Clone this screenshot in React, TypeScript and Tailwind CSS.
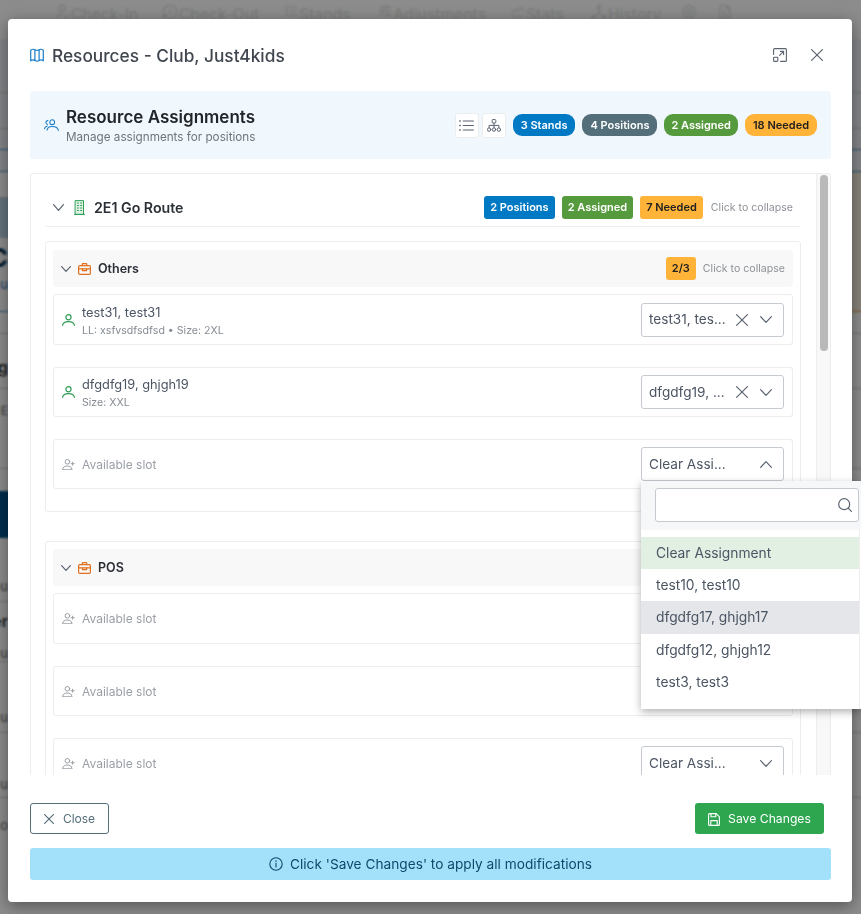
import React from 'react';
import {
  TbAdjustmentsHorizontal,
  TbChartLine,
  TbFileText,
  TbHierarchy2,
  TbHistory,
  TbListCheck,
  TbSettings,
  TbUserCheck,
} from 'react-icons/tb';

// Small hand drawn icons, sized in the pixels they take up on the page
function Icon({ w, h, className, sw = 1.2, children }: { w: number; h: number; className?: string; sw?: number; children: React.ReactNode }) {
  return (
    <svg
      width={w}
      height={h}
      viewBox={`0 0 ${w} ${h}`}
      fill="none"
      stroke="currentColor"
      strokeWidth={sw}
      strokeLinecap="round"
      strokeLinejoin="round"
      className={`shrink-0 ${className ?? ''}`}
    >
      {children}
    </svg>
  );
}

const ChevronDown = ({ w, h, className }: { w: number; h: number; className?: string }) => (
  <Icon w={w} h={h} className={className}>
    <path d={`M0.6 0.6 L${w / 2} ${h - 0.6} L${w - 0.6} 0.6`} />
  </Icon>
);

const ChevronUp = ({ w, h, className }: { w: number; h: number; className?: string }) => (
  <Icon w={w} h={h} className={className}>
    <path d={`M0.6 ${h - 0.6} L${w / 2} 0.6 L${w - 0.6} ${h - 0.6}`} />
  </Icon>
);

const Cross = ({ s, className }: { s: number; className?: string }) => (
  <Icon w={s} h={s} className={className}>
    <path d={`M0.6 0.6 L${s - 0.6} ${s - 0.6} M${s - 0.6} 0.6 L0.6 ${s - 0.6}`} />
  </Icon>
);

const UserIcon = ({ className }: { className?: string }) => (
  <Icon w={13} h={12} className={className}>
    <circle cx="6.5" cy="3.2" r="2.6" />
    <path d="M0.6 11.4 C1 8.6 3.4 7.6 6.5 7.6 S12 8.6 12.4 11.4" />
  </Icon>
);

const UserPlusIcon = ({ className }: { className?: string }) => (
  <Icon w={13} h={11} className={className} sw={1}>
    <circle cx="5.4" cy="2.8" r="2.3" />
    <path d="M0.5 10.4 C0.9 8 3 7 5.4 7 S9.6 8 10 10.4 Z" />
    <path d="M10.6 3.2 V6.2 M9.1 4.7 H12.3" />
  </Icon>
);

const Briefcase = ({ className }: { className?: string }) => (
  <Icon w={13} h={12} className={className}>
    <rect x="0.6" y="2.6" width="11.8" height="8.8" rx="1.2" />
    <path d="M4.2 2.6 V1.4 C4.2 0.9 4.6 0.6 5 0.6 H8 C8.4 0.6 8.8 0.9 8.8 1.4 V2.6" />
    <path d="M0.6 5.8 H12.4" />
    <path d="M4.4 5.8 V7.6 H8.6 V5.8" />
  </Icon>
);

const Building = ({ className }: { className?: string }) => (
  <Icon w={11} h={15} className={className} sw={1}>
    <rect x="1.5" y="0.6" width="8" height="13.8" fill="#dff1e5" />
    <path d="M0.4 14.4 H10.6" />
    <path d="M3.4 3 H4.4 M6.6 3 H7.6 M3.4 5.5 H4.4 M6.6 5.5 H7.6 M3.4 8 H4.4 M6.6 8 H7.6 M3.4 10.5 H4.4 M6.6 10.5 H7.6" />
  </Icon>
);

const MapIcon = ({ className }: { className?: string }) => (
  <Icon w={14} h={14} className={className}>
    <path d="M0.7 2.2 C2 1.2 3.6 1 4.9 1.8 V12.4 C3.6 11.6 2 11.8 0.7 12.8 Z" />
    <path d="M4.9 1.8 C6.1 2.6 7.9 2.6 9.1 1.8 V12.4 C7.9 13.2 6.1 13.2 4.9 12.4" />
    <path d="M9.1 1.8 C10.4 1 12 1.2 13.3 2.2 V12.8 C12 11.8 10.4 11.6 9.1 12.4" />
  </Icon>
);

const ExpandIcon = ({ className }: { className?: string }) => (
  <Icon w={14} h={14} className={className} sw={1.1}>
    <path d="M0.6 6.4 V1.6 C0.6 1 1 0.6 1.6 0.6 H12.4 C13 0.6 13.4 1 13.4 1.6 V12.4 C13.4 13 13 13.4 12.4 13.4 H7.6" />
    <rect x="0.6" y="9.2" width="4.2" height="4.2" rx="0.6" />
    <path d="M6.6 7.4 L10.6 3.4 M7.4 3.4 H10.6 V6.6" />
  </Icon>
);

const UsersIcon = ({ className }: { className?: string }) => (
  <Icon w={15} h={12} className={className} sw={1.05}>
    <circle cx="8.2" cy="3.2" r="2.4" />
    <path d="M3 11.2 C3.3 8.6 5.5 7.4 8.2 7.4 S13.9 8.6 14.4 11.4" />
    <path d="M3.9 1.6 C2.6 1.6 1.9 2.6 1.9 3.5 C1.9 4.4 2.6 5.2 3.6 5.4" />
    <path d="M0.5 9.8 C0.7 8.2 1.8 7.4 3.2 7" />
  </Icon>
);

const ListIcon = ({ className }: { className?: string }) => (
  <Icon w={15} h={11} className={className} sw={1.1}>
    <path d="M4.2 1 H14.4 M4.2 5.5 H14.4 M4.2 10 H14.4" />
    <path d="M0.8 1 H1.2 M0.8 5.5 H1.2 M0.8 10 H1.2" strokeWidth={1.5} />
  </Icon>
);

const TreeIcon = ({ className }: { className?: string }) => (
  <Icon w={14} h={13} className={className} sw={1}>
    <rect x="5.2" y="0.5" width="3.6" height="3.6" rx="1" />
    <path d="M7 4.1 V8.6 M2.1 8.6 V6.4 H11.9 V8.6" />
    <circle cx="2.1" cy="10.6" r="1.7" />
    <circle cx="7" cy="10.6" r="1.7" />
    <circle cx="11.9" cy="10.6" r="1.7" />
  </Icon>
);

const SearchIcon = ({ className }: { className?: string }) => (
  <Icon w={14} h={14} className={className}>
    <circle cx="6.2" cy="6.2" r="5.5" />
    <path d="M10.2 10.2 L13.4 13.4" />
  </Icon>
);

const SaveIcon = ({ className }: { className?: string }) => (
  <Icon w={12} h={13} className={className} sw={1.1}>
    <path d="M0.6 1.6 C0.6 1 1 0.6 1.6 0.6 H8.2 L11.4 3.8 V11.4 C11.4 12 11 12.4 10.4 12.4 H1.6 C1 12.4 0.6 12 0.6 11.4 Z" />
    <path d="M3 0.6 V3.8 H7.8 V0.6" />
    <path d="M2.8 12.4 V7.6 H9.2 V12.4" />
  </Icon>
);

const InfoIcon = ({ className }: { className?: string }) => (
  <Icon w={14} h={14} className={className} sw={1.1}>
    <circle cx="7" cy="7" r="6.2" />
    <path d="M7 6.4 V10" />
    <path d="M7 4 V4.2" strokeWidth={1.4} />
  </Icon>
);

// Strip of the page that peeks out left of the modal
function EdgeRow({ h, text, cls = '', line = '' }: { h: string; text?: string; cls?: string; line?: string }) {
  return (
    <div className={`${h} ${line} shrink-0 overflow-hidden`}>
      {text && <div className={`w-[8px] overflow-hidden flex justify-end whitespace-nowrap ${cls}`}>{text}</div>}
    </div>
  );
}

// Page that sits behind the backdrop, only its edges show
function BackgroundPage() {
  return (
    <div className="flex flex-col h-full bg-white text-[#333]">
      <div className="h-[39px] shrink-0 flex items-start pl-[53px] pt-[3px] text-[15.5px] font-medium text-[#dfe4e1] whitespace-nowrap">
        <TbUserCheck size={18} />
        <span className="w-[90px]">Check-In</span>
        <TbHistory size={18} />
        <span className="w-[104px]">Check-Out</span>
        <TbListCheck size={16} />
        <span className="w-[78px]">Stands</span>
        <TbAdjustmentsHorizontal size={16} />
        <span className="w-[116px]">Adjustments</span>
        <TbChartLine size={17} />
        <span className="w-[64px]">Stats</span>
        <TbHierarchy2 size={18} />
        <span className="w-[72px]">History</span>
        <TbSettings size={18} className="mr-[18px]" />
        <TbFileText size={18} />
      </div>
      <div className="h-[54px] shrink-0 bg-[#eef3f7] border-b border-[#ccc]" />
      <div className="h-[36px] shrink-0 bg-[#eef3f7] border-b border-[#ccc]" />
      <div className="h-[21px] shrink-0 bg-[#eef3f7] border-b border-[#4a90c8]" />
      <div className="h-[22px] shrink-0 bg-[#eef3f7] border-b border-[#4a90c8]" />
      <div className="h-[140px] shrink-0 flex">
        <div className="w-1/2 border-b border-[#4a90c8]">
          <div className="h-[25px]" />
          <div className="h-[41px] bg-[#b9d0e2]" />
          <EdgeRow h="h-[40px]" text="C" cls="text-[26px] leading-[40px] font-bold text-[#0b3a5c]" />
          <EdgeRow h="h-[12px]" text="qu" cls="text-[13px] leading-[12px] text-[#1a6fb0]" />
        </div>
        <div className="w-1/2 bg-[#f8eede] border-b border-[#e6953f]" />
      </div>
      <div className="h-[22px] shrink-0 border-b border-[#ccc]" />
      <div className="h-[55px] shrink-0 border-b border-[#ccc] pt-[22px]">
        <EdgeRow h="h-[22px]" text="og" cls="text-[16px] leading-[22px] font-semibold" />
      </div>
      <div className="h-[80px] shrink-0 border-b border-[#ccc] pt-[14px]">
        <EdgeRow h="h-[16px]" text="UE" cls="text-[12px] leading-[16px] text-[#666]" />
      </div>
      <div className="h-[22px] shrink-0" />
      <div className="h-[47px] shrink-0 bg-[#00558f]" />
      <div className="h-[64px] shrink-0 border-b border-[#ccc] pt-[40px]">
        <EdgeRow h="h-[16px]" text="ou" cls="text-[13px] leading-[16px] text-[#666]" />
      </div>
      <div className="h-[60px] shrink-0 border-b border-[#ccc] pt-[9px]">
        <EdgeRow h="h-[25px]" text="er" cls="text-[16px] leading-[20px] font-semibold" />
        <EdgeRow h="h-[25px]" text="ou" cls="text-[13px] leading-[16px] text-[#666] mt-[9px]" />
      </div>
      <div className="h-[71px] shrink-0 border-b border-[#ccc] pt-[47px]">
        <EdgeRow h="h-[16px]" text="ou" cls="text-[13px] leading-[16px] text-[#666]" />
      </div>
      <div className="h-[65px] shrink-0 border-b border-[#ccc] pt-[43px]">
        <EdgeRow h="h-[16px]" text="ou" cls="text-[13px] leading-[16px] text-[#666]" />
      </div>
      <div className="pt-[19px]">
        <EdgeRow h="h-[16px]" text="to" cls="text-[13px] leading-[16px] text-[#666]" />
      </div>
    </div>
  );
}

function Chip({ label, color, dark, pad }: { label: string; color: string; dark?: boolean; pad: string }) {
  return (
    <span
      className={`${color} ${dark ? 'text-[#212121]' : 'text-white'} ${pad} inline-flex items-center text-[11px] font-semibold whitespace-nowrap`}
    >
      {label}
    </span>
  );
}

function SelectBox({ value, clearable, open }: { value: string; clearable?: boolean; open?: boolean }) {
  return (
    <div className="w-[143px] h-[34px] shrink-0 border border-[#c5cad1] rounded-[3px] bg-white flex items-center pl-[7px] pr-[11px] text-[13.6px] text-[#4b5563]">
      <span className="flex-1 whitespace-nowrap">{value}</span>
      {clearable && <Cross s={12} className="mr-[12px] text-[#5b6470]" />}
      {open ? <ChevronUp w={12} h={7} className="text-[#5b6470]" /> : <ChevronDown w={12} h={7} className="text-[#5b6470]" />}
    </div>
  );
}

function AssignedRow({ name, detail, value, h }: { name: string; detail: string; value: string; h: string }) {
  return (
    <div className={`${h} mb-[22px] border border-[#eceded] rounded-[3px] flex items-center px-[8px]`}>
      <UserIcon className="text-[#2e9e55]" />
      <div className="ml-[7px] flex-1 pt-[4px]">
        <div className="text-[12.8px] leading-[18px] text-[#4b5563]">{name}</div>
        <div className="text-[10.6px] leading-[18px] text-[#868c94]">{detail}</div>
      </div>
      <SelectBox value={value} clearable />
    </div>
  );
}

// covered: the open menu lies over this row's select, so its value never shows
function EmptyRow({ open, covered, h = 'h-[50px]' }: { open?: boolean; covered?: boolean; h?: string }) {
  return (
    <div className={`${h} mb-[22px] border border-[#eceded] rounded-[3px] flex items-center px-[8px]`}>
      <UserPlusIcon className="text-[#9a9fa6]" />
      <span className="ml-[7px] flex-1 pt-[1px] text-[12px] text-[#9a9fa6]">Available slot</span>
      <SelectBox value={covered ? '' : 'Clear Assi...'} open={open} />
    </div>
  );
}

function SectionHeader({ name, count }: { name: string; count?: string }) {
  return (
    <div className="h-[37px] mb-[7px] bg-[#f8f8f8] rounded-[3px] flex items-center px-[8px]">
      <ChevronDown w={10} h={6} className="text-[#5b6470]" />
      <Briefcase className="ml-[7px] text-[#e0701e]" />
      <span className="ml-[7px] flex-1 pt-[1px] text-[12.5px] font-semibold text-[#2b2f36]">{name}</span>
      {count && (
        <span className="h-[23px] px-[6px] rounded-[3px] bg-[#ffb338] text-[#212121] inline-flex items-center text-[11px] font-semibold">{count}</span>
      )}
      {count && <span className="ml-[7px] text-[10.6px] text-[#8d9297]">Click to collapse</span>}
    </div>
  );
}

export default function App() {
  return (
    <div className="relative w-[861px] h-[914px] overflow-hidden font-['Inter',sans-serif]">
      <BackgroundPage />
      <div className="absolute inset-0 bg-black/45 backdrop-blur-[1px]" />

      {/* Modal */}
      <div className="absolute left-[8px] top-[19px] w-[844px] h-[883px] bg-white rounded-[4px] shadow-[0_4px_16px_rgba(0,0,0,0.4)] flex flex-col pl-[22px] pr-[21px]">
        <div className="h-[72px] shrink-0 flex items-center">
          <MapIcon className="text-[#1a7fc9]" />
          <h2 className="ml-[8px] flex-1 pt-[1px] text-[17.3px] font-medium text-[#40464f]">Resources - Club, Just4kids</h2>
          <ExpandIcon className="text-[#5b6470]" />
          <Cross s={12} className="ml-[24px] mr-[8px] text-[#5b6470]" />
        </div>

        <div className="h-[68px] shrink-0 bg-[#f0f7fd] rounded-[3px] flex items-center px-[14px]">
          <UsersIcon className="text-[#1a7fc9]" />
          <div className="ml-[7px] flex-1">
            <div className="text-[17px] leading-[22px] font-semibold text-[#212529]">Resource Assignments</div>
            <div className="mt-[1px] text-[11.7px] leading-[16px] text-[#6f757c]">Manage assignments for positions</div>
          </div>
          <div className="flex gap-[3px] mr-[7px]">
            <div className="w-[24px] h-[25px] bg-white border border-[#eceded] rounded-[3px] flex items-center justify-center">
              <ListIcon className="text-[#5b6470]" />
            </div>
            <div className="w-[24px] h-[25px] bg-white border border-[#eceded] rounded-[3px] flex items-center justify-center">
              <TreeIcon className="text-[#5b6470]" />
            </div>
          </div>
          <div className="flex gap-[7px]">
            <Chip label="3 Stands" color="bg-[#0079c5]" pad="h-[22px] px-[8px] rounded-[9px]" />
            <Chip label="4 Positions" color="bg-[#546e7a]" pad="h-[22px] px-[8px] rounded-[9px]" />
            <Chip label="2 Assigned" color="bg-[#559a3c]" pad="h-[22px] px-[7px] rounded-[9px]" />
            <Chip label="18 Needed" color="bg-[#ffb338]" dark pad="h-[22px] px-[8px] rounded-[9px]" />
          </div>
        </div>

        {/* Scrolling list */}
        <div className="mt-[14px] h-[602px] shrink-0 border border-b-0 border-[#eceded] rounded-t-[3px] flex overflow-hidden">
          <div className="flex-1 min-w-0 pt-[13px] pl-[14px] pr-[15px] overflow-hidden">
            <div className="h-[40px] mb-[14px] pt-[2px] border-b border-[#eceded] rounded-b-[3px] flex items-center px-[8px]">
              <ChevronDown w={11} h={7} className="text-[#5b6470]" />
              <Building className="ml-[10px] text-[#2e9e55]" />
              <span className="ml-[9px] flex-1 text-[14.2px] font-semibold text-[#2b2f36]">2E1 Go Route</span>
              <div className="flex gap-[7px]">
                <Chip label="2 Positions" color="bg-[#0079c5]" pad="h-[23px] px-[6px] rounded-[3px]" />
                <Chip label="2 Assigned" color="bg-[#559a3c]" pad="h-[23px] px-[6px] rounded-[3px]" />
                <Chip label="7 Needed" color="bg-[#ffb338]" dark pad="h-[23px] px-[6px] rounded-[3px]" />
              </div>
              <span className="ml-[8px] text-[10.6px] text-[#8d9297]">Click to collapse</span>
            </div>

            <div className="h-[271px] mb-[29px] border border-[#eceded] rounded-[3px] px-[7px] pt-[8px]">
              <SectionHeader name="Others" count="2/3" />
              <AssignedRow h="h-[51px]" name="test31, test31" detail="LL: xsfvsdfsdfsd • Size: 2XL" value="test31, tes..." />
              <AssignedRow h="h-[50px]" name="dfgdfg19, ghjgh19" detail="Size: XXL" value="dfgdfg19, ..." />
              <EmptyRow open />
            </div>

            <div className="border border-[#eceded] rounded-[3px] px-[7px] pt-[7px]">
              <SectionHeader name="POS" />
              <EmptyRow h="h-[51px]" covered />
              <EmptyRow covered />
              <EmptyRow />
            </div>
          </div>

          {/* Scrollbar */}
          <div className="w-[14px] shrink-0 bg-[#f8f8f8] border-l border-[#eceded] pl-[3px] pt-[1px]">
            <div className="w-[8px] h-[176px] bg-[#b9b9b9] rounded-[4px]" />
          </div>
        </div>

        {/* Footer */}
        <div className="mt-[28px] flex justify-between pr-[7px]">
          <button className="w-[79px] h-[31px] pt-[1px] border border-[#546e7a] rounded-[3px] flex items-center justify-center gap-[9px] text-[12px] text-[#546e7a]">
            <Cross s={10} />
            Close
          </button>
          <button className="w-[129px] h-[31px] pt-[1px] bg-[#2ea650] rounded-[3px] flex items-center justify-center gap-[8px] text-[12.2px] text-white">
            <SaveIcon />
            Save Changes
          </button>
        </div>
        <div className="mt-[14px] h-[32px] bg-[#a3e1fb] rounded-[3px] flex items-center justify-center gap-[7px] text-[13.7px] text-[#0d4a6b]">
          <InfoIcon />
          Click 'Save Changes' to apply all modifications
        </div>
      </div>

      {/* Open select menu */}
      <div className="absolute left-[641px] top-[481px] w-[220px] h-[228px] bg-white shadow-[0_3px_8px_rgba(0,0,0,0.3)]">
        <div className="h-[49px] bg-[#f6f7f9] pl-[14px] pt-[7px]">
          <div className="w-[204px] h-[34px] bg-white border border-[#c5cad1] rounded-[3px] flex items-center justify-end pr-[6px]">
            <SearchIcon className="text-[#5b6470]" />
          </div>
        </div>
        <div className="w-[219px] h-[179px] pt-[7px] border-r border-[#eceded] text-[13.8px] text-[#4b5563]">
          <div className="h-[32px] flex items-center pl-[15px] bg-[#e2f0e4]">Clear Assignment</div>
          <div className="h-[32px] flex items-center pl-[15px]">test10, test10</div>
          <div className="h-[33px] flex items-center pl-[15px] bg-[#e4e6e9]">dfgdfg17, ghjgh17</div>
          <div className="h-[32px] flex items-center pl-[15px]">dfgdfg12, ghjgh12</div>
          <div className="h-[32px] flex items-center pl-[15px]">test3, test3</div>
        </div>
      </div>
    </div>
  );
}
